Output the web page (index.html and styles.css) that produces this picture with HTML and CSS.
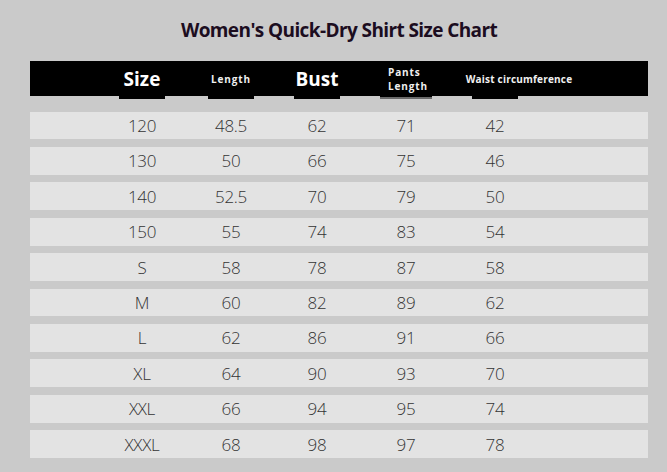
FILE: index.html
```html
<!DOCTYPE html>
<html lang="en">
<head>
<meta charset="utf-8">
<title>Women's Quick-Dry Shirt Size Chart</title>
<link rel="stylesheet" href="styles.css">
</head>
<body>
<div class="chart">
  <h1 class="title">Women's Quick-Dry Shirt Size Chart</h1>
  <div class="head">
    <div class="hcell"><div class="tab"><span class="lbl big">Size</span></div></div>
    <div class="hcell"><div class="tab"><span class="lbl small">Length</span></div></div>
    <div class="hcell"><div class="tab"><span class="lbl big">Bust</span></div></div>
    <div class="hcell"><div class="tab tab-grey"><span class="lbl small two">Pants<br>Length</span></div></div>
    <div class="hcell"><div class="tab"><span class="lbl small waist">Waist circumference</span></div></div>
  </div>
  <div class="rows">
    <div class="row"><span>120</span><span>48.5</span><span>62</span><span>71</span><span>42</span></div>
    <div class="row"><span>130</span><span>50</span><span>66</span><span>75</span><span>46</span></div>
    <div class="row"><span>140</span><span>52.5</span><span>70</span><span>79</span><span>50</span></div>
    <div class="row"><span>150</span><span>55</span><span>74</span><span>83</span><span>54</span></div>
    <div class="row"><span>S</span><span>58</span><span>78</span><span>87</span><span>58</span></div>
    <div class="row"><span>M</span><span>60</span><span>82</span><span>89</span><span>62</span></div>
    <div class="row"><span>L</span><span>62</span><span>86</span><span>91</span><span>66</span></div>
    <div class="row"><span>XL</span><span>64</span><span>90</span><span>93</span><span>70</span></div>
    <div class="row"><span>XXL</span><span>66</span><span>94</span><span>95</span><span>74</span></div>
    <div class="row"><span>XXXL</span><span>68</span><span>98</span><span>97</span><span>78</span></div>
  </div>
</div>
</body>
</html>
```
FILE: styles.css
```css
html, body {
  margin: 0;
  padding: 0;
  background: #cacaca;
  width: 667px;
  height: 472px;
  overflow: hidden;
}
.chart {
  width: 618px;
  margin-left: 30px;
}
.title {
  margin: 0;
  height: 61px;
  display: flex;
  align-items: center;
  justify-content: center;
  font-family: "Open Sans", sans-serif;
  font-weight: 700;
  font-size: 19px;
  letter-spacing: -0.6px;
  color: #1c0d1f;
  padding-bottom: 1px;
  box-sizing: border-box;
}
.head {
  height: 35px;
  background: #000;
  display: grid;
  grid-template-columns: 90px 88px 84px 94px 84px;
  padding-left: 67px;
}
.hcell {
  display: flex;
  justify-content: center;
}
.tab {
  width: 46px;
  height: 38px;
  background: #000;
  display: flex;
  align-items: center;
  justify-content: center;
}
.tab-grey {
  width: 52px;
  box-shadow: inset 0 -2px 0 #6a6a6a;
}
.lbl {
  color: #fff;
  font-family: "Open Sans", sans-serif;
  font-weight: 700;
  white-space: nowrap;
  margin-top: -2px;
}
.big {
  font-size: 19px;
  letter-spacing: 0;
}
.small {
  font-size: 10px;
  letter-spacing: 0.9px;
  color: #f0f0f0;
}
.two {
  line-height: 14px;
  text-align: left;
  margin-top: -3px;
  margin-left: 4px;
}
.waist {
  letter-spacing: 0.2px;
  margin-left: 48px;
}
.rows {
  margin-top: 15.7px;
  display: flex;
  flex-direction: column;
  gap: 7.6px;
}
.row {
  height: 27.8px;
  background: #e3e3e3;
  display: grid;
  grid-template-columns: 90px 88px 84px 94px 84px;
  padding-left: 67px;
  align-items: center;
}
.row span {
  text-align: center;
  font-family: "Open Sans", sans-serif;
  font-weight: 300;
  font-size: 17px;
  color: #333;
  letter-spacing: -0.3px;
}
```
